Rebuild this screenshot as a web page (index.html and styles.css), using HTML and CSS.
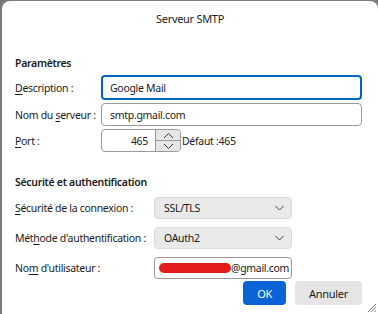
FILE: index.html
```html
<!DOCTYPE html>
<html lang="fr">
<head>
<meta charset="utf-8">
<link rel="stylesheet" href="styles.css">
</head>
<body>
<div class="window">
  <div class="title">Serveur SMTP</div>

  <div class="heading">Paramètres</div>
  <div class="form form-a">
    <label class="label"><u>D</u>escription :</label>
    <div class="field focused">Google Mail</div>

    <label class="label">Nom du <u>s</u>erveur :</label>
    <div class="field">smtp.gmail.com</div>

    <label class="label"><u>P</u>ort :</label>
    <div class="port-row">
      <div class="spin">
        <span class="spin-value">465</span>
        <span class="spin-btns">
          <span class="spin-btn"><svg width="11" height="7" viewBox="0 0 11 7"><path d="M1 6 L5.5 1.5 L10 6" fill="none" stroke="#333" stroke-width="1"/></svg></span>
          <span class="spin-btn"><svg width="11" height="7" viewBox="0 0 11 7"><path d="M1 1 L5.5 5.5 L10 1" fill="none" stroke="#333" stroke-width="1"/></svg></span>
        </span>
      </div>
      <span class="default">Défaut :465</span>
    </div>
  </div>

  <div class="heading heading-b">Sécurité et authentification</div>
  <div class="form form-b">
    <label class="label"><u>S</u>écurité de la connexion :</label>
    <div class="select"><span>SSL/TLS</span><svg width="9" height="6" viewBox="0 0 9 6"><path d="M0.5 1 L4.5 5 L8.5 1" fill="none" stroke="#444" stroke-width="1"/></svg></div>

    <label class="label">Mét<u>h</u>ode d'authentification :</label>
    <div class="select"><span>OAuth2</span><svg width="9" height="6" viewBox="0 0 9 6"><path d="M0.5 1 L4.5 5 L8.5 1" fill="none" stroke="#444" stroke-width="1"/></svg></div>

    <label class="label">No<u>m</u> d'utilisateur :</label>
    <div class="field user"><span class="redact"></span>@gmail.com</div>
  </div>

  <div class="buttons">
    <button class="btn primary">OK</button>
    <button class="btn">Annuler</button>
  </div>

  <svg class="grip" width="12" height="12" viewBox="0 0 12 12">
    <path d="M11 3 L3 11 M11 6 L6 11 M11 9 L9 11" stroke="#888" stroke-width="1"/>
  </svg>
</div>
</body>
</html>
```

FILE: styles.css
```css
html, body {
  margin: 0;
  height: 100%;
}
body {
  background: #7a7a7a;
  font-family: "Noto Sans", sans-serif;
  font-size: 10.5px;
  letter-spacing: -0.3px;
  color: #1b1b1b;
  overflow: hidden;
}
.window {
  position: relative;
  margin: 1px 0 0 2px;
  height: 313px;
  background: #fff;
  border-radius: 8px 8px 0 0;
  padding: 0 16px 0 13px;
  box-sizing: border-box;
}
.title {
  font-size: 11px;
  text-align: center;
  padding-top: 10px;
  height: 26px;
  box-sizing: border-box;
  line-height: 16px;
  padding-left: 3px;
}
.heading {
  font-weight: 600;
  margin-top: 28px;
  line-height: 16px;
}
.heading-b {
  margin-top: 22px;
}
.form {
  display: grid;
  align-items: center;
  column-gap: 3px;
  margin-top: 4px;
}
.form-a {
  grid-template-columns: 83px 1fr;
  grid-template-rows: 25px 23px 23px;
  row-gap: 3px;
}
.form-b {
  grid-template-columns: 136px 138px;
  grid-template-rows: 22px 22px 22px;
  row-gap: 8px;
  margin-top: 7px;
}
.label {
  white-space: nowrap;
}
.label u {
  text-decoration-thickness: 1px;
  text-underline-offset: 2px;
}
.field {
  height: 100%;
  box-sizing: border-box;
  border: 1px solid #9a9a9a;
  border-radius: 4px;
  padding: 0 8px;
  display: flex;
  align-items: center;
  white-space: nowrap;
  overflow: hidden;
}
.field.focused {
  border: 2px solid #0067c0;
  padding: 0 7px;
}
.port-row {
  display: flex;
  align-items: center;
  height: 100%;
}
.spin {
  width: 80px;
  height: 100%;
  box-sizing: border-box;
  border: 1px solid #9a9a9a;
  border-radius: 4px;
  display: flex;
  overflow: hidden;
}
.spin-value {
  flex: 1;
  text-align: right;
  padding-right: 7px;
  align-self: center;
}
.spin-btns {
  width: 24px;
  display: flex;
  flex-direction: column;
  border-left: 1px solid #9a9a9a;
  background: #e6e6e6;
}
.spin-btn {
  flex: 1;
  display: flex;
  align-items: center;
  justify-content: center;
}
.spin-btn + .spin-btn {
  border-top: 1px solid #9a9a9a;
}
.default {
  margin-left: 1px;
}
.select {
  height: 100%;
  box-sizing: border-box;
  background: #e9e9e9;
  border: 1px solid #dadada;
  border-radius: 4px;
  display: flex;
  align-items: center;
  justify-content: space-between;
  padding: 0 7px 0 9px;
}
.user {
  padding: 0 4px;
}
.redact {
  display: inline-block;
  width: 72px;
  height: 10px;
  border-radius: 5px;
  background: #e51c1c;
  flex: none;
}
.buttons {
  display: flex;
  justify-content: flex-end;
  gap: 9px;
  margin-top: 2px;
}
.btn {
  font: inherit;
  font-size: 11px;
  letter-spacing: -0.3px;
  height: 24px;
  border: none;
  border-radius: 4px;
  background: #e5e5e5;
  color: #1b1b1b;
  padding: 0 14px;
}
.btn.primary {
  background: #0a64d6;
  color: #fff;
  width: 43px;
  padding: 0;
}
.grip {
  position: absolute;
  right: 1px;
  bottom: 1px;
}
```
